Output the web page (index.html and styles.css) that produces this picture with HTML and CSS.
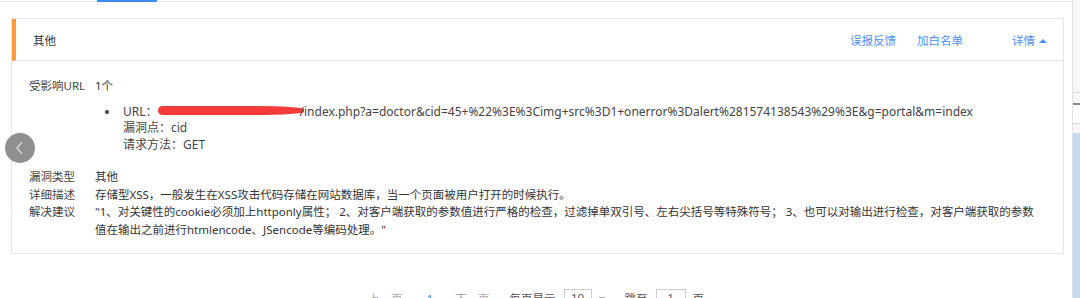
FILE: index.html
```html
<!DOCTYPE html>
<html>
	<head>
		<meta charset="utf-8">
		<title>漏洞详情</title>
		<link rel="stylesheet" href="styles.css">
	</head>
	<body>
		<div id="page">
			<div id="main">
				<div class="tabs"><div class="tab-active"></div></div>

				<div class="card">
					<div class="card-head">
						<span class="card-title">其他</span>
						<div class="actions">
							<a href="#">误报反馈</a>
							<a href="#">加白名单</a>
							<a href="#" class="toggle">详情 <span class="caret"></span></a>
						</div>
					</div>

					<div class="card-body">
						<div class="row">
							<span class="label">受影响URL</span>
							<span class="value">1个</span>
						</div>
						<ul class="urls">
							<li>
								URL：<span class="scribble"></span>/index.php?a=doctor&amp;cid=45+%22%3E%3Cimg+src%3D1+onerror%3Dalert%281574138543%29%3E&amp;g=portal&amp;m=index<br>
								漏洞点：cid<br>
								请求方法：GET
							</li>
						</ul>

						<div class="info">
							<div class="row">
								<span class="label">漏洞类型</span>
								<span class="value">其他</span>
							</div>
							<div class="row">
								<span class="label">详细描述</span>
								<span class="value">存储型XSS，一般发生在XSS攻击代码存储在网站数据库，当一个页面被用户打开的时候执行。</span>
							</div>
							<div class="row">
								<span class="label">解决建议</span>
								<span class="value">"1、对关键性的cookie必须加上httponly属性； 2、对客户端获取的参数值进行严格的检查，过滤掉单双引号、左右尖括号等特殊符号； 3、也可以对输出进行检查，对客户端获取的参数值在输出之前进行htmlencode、JSencode等编码处理。"</span>
							</div>
						</div>
					</div>
				</div>

				<div class="pager">
					<span class="muted">上一页</span>
					<span class="current">1</span>
					<span class="muted next">下一页</span>
					<span class="per">每页显示</span>
					<span class="box size">10</span>
					<span class="muted arrow">▾</span>
					<span class="jump">跳至</span>
					<span class="box page">1</span>
					<span class="unit">页</span>
				</div>
			</div>

			<div id="side">
				<div class="side-top"></div>
				<div class="side-bar"></div>
				<div class="side-mid"></div>
				<div class="side-sel"></div>
			</div>
		</div>

		<div class="prev-btn">
			<svg width="12" height="14" viewBox="0 0 12 14"><path d="M8 1 L3 7 L8 13" fill="none" stroke="#d8d8d8" stroke-width="1.4"/></svg>
		</div>
	</body>
</html>
```

FILE: styles.css
```css
body {
	margin: 0;
	font-family: "Noto Sans", "Noto Sans CJK SC", sans-serif;
	font-size: 11.5px;
	color: #333;
	background: #fff;
	overflow: hidden;
}

#page {
	display: flex;
	height: 298px;
}

#main {
	width: 1073px;
}

.tabs {
	height: 1px;
	border-bottom: 1px solid #e8e8e8;
}

.tab-active {
	margin-left: 97px;
	width: 60px;
	height: 2px;
	background: #3d8bf2;
}

.card {
	margin: 16px 0 0 11px;
	width: 1051px;
	border: 1px solid #e6e6e6;
}

.card-head {
	display: flex;
	align-items: center;
	justify-content: space-between;
	height: 41px;
	border-left: 4px solid #fb9a42;
	border-bottom: 1px solid #e6e6e6;
	padding: 0 16px 0 17px;
}

.actions {
	display: flex;
}

.actions a {
	color: #4e8ff5;
	text-decoration: none;
	margin-left: 21px;
}

.actions a.toggle {
	margin-left: 49px;
}

.caret {
	display: inline-block;
	width: 0;
	height: 0;
	border-left: 4px solid transparent;
	border-right: 4px solid transparent;
	border-bottom: 4px solid #4e8ff5;
	vertical-align: 2px;
	margin-left: 1px;
}

.card-body {
	padding: 16px 18px 15px 17px;
}

.row {
	display: flex;
	line-height: 17.5px;
}

.label {
	flex: none;
	width: 66px;
	color: #444;
}

.value {
	flex: 1;
}

.urls {
	margin: 9px 0 0 0;
	padding-left: 91px;
	line-height: 16.5px;
	font-size: 12px;
	color: #444;
}

.urls li {
	list-style: disc;
	padding-left: 3px;
}

.scribble {
	display: inline-block;
	width: 146px;
	height: 9px;
	margin-right: -4px;
	background: #f43a3a;
	border-radius: 6px 45% 45% 6px / 6px 50% 50% 6px;
	vertical-align: 1px;
}

.info {
	margin-top: 15px;
}

.pager {
	display: flex;
	align-items: center;
	margin: 35px 0 0 368px;
	color: #555;
}

.pager .muted {
	color: #aaa;
}

.pager .current {
	color: #3d8bf2;
	margin-left: 24px;
}

.pager .next {
	margin-left: 22px;
}

.pager .per {
	margin-left: 20px;
}

.pager .box {
	border: 1px solid #ccc;
	line-height: 16px;
	text-align: center;
	margin-left: 8px;
}

.pager .size {
	width: 26px;
}

.pager .arrow {
	margin-left: 7px;
}

.pager .jump {
	margin-left: 20px;
}

.pager .page {
	width: 28px;
}

.pager .unit {
	margin-left: 7px;
}

#side {
	width: 7px;
	border-left: 1px solid #e2e2e2;
	background: #f7f7f7;
}

.side-top {
	height: 92px;
	border-bottom: 1px solid #dcdcdc;
}

.side-bar {
	height: 10px;
	border-bottom: 2px solid #8a8a8a;
}

.side-mid {
	height: 18px;
	border-bottom: 1px solid #d8d8d8;
	background: #fff;
}

.side-sel {
	margin-top: 9px;
	height: 170px;
	background: #c5d9f1;
}

.prev-btn {
	position: absolute;
	left: 5px;
	top: 133px;
	width: 30px;
	height: 30px;
	border-radius: 50%;
	background: #8f8f8f;
	display: flex;
	align-items: center;
	justify-content: center;
}
```
